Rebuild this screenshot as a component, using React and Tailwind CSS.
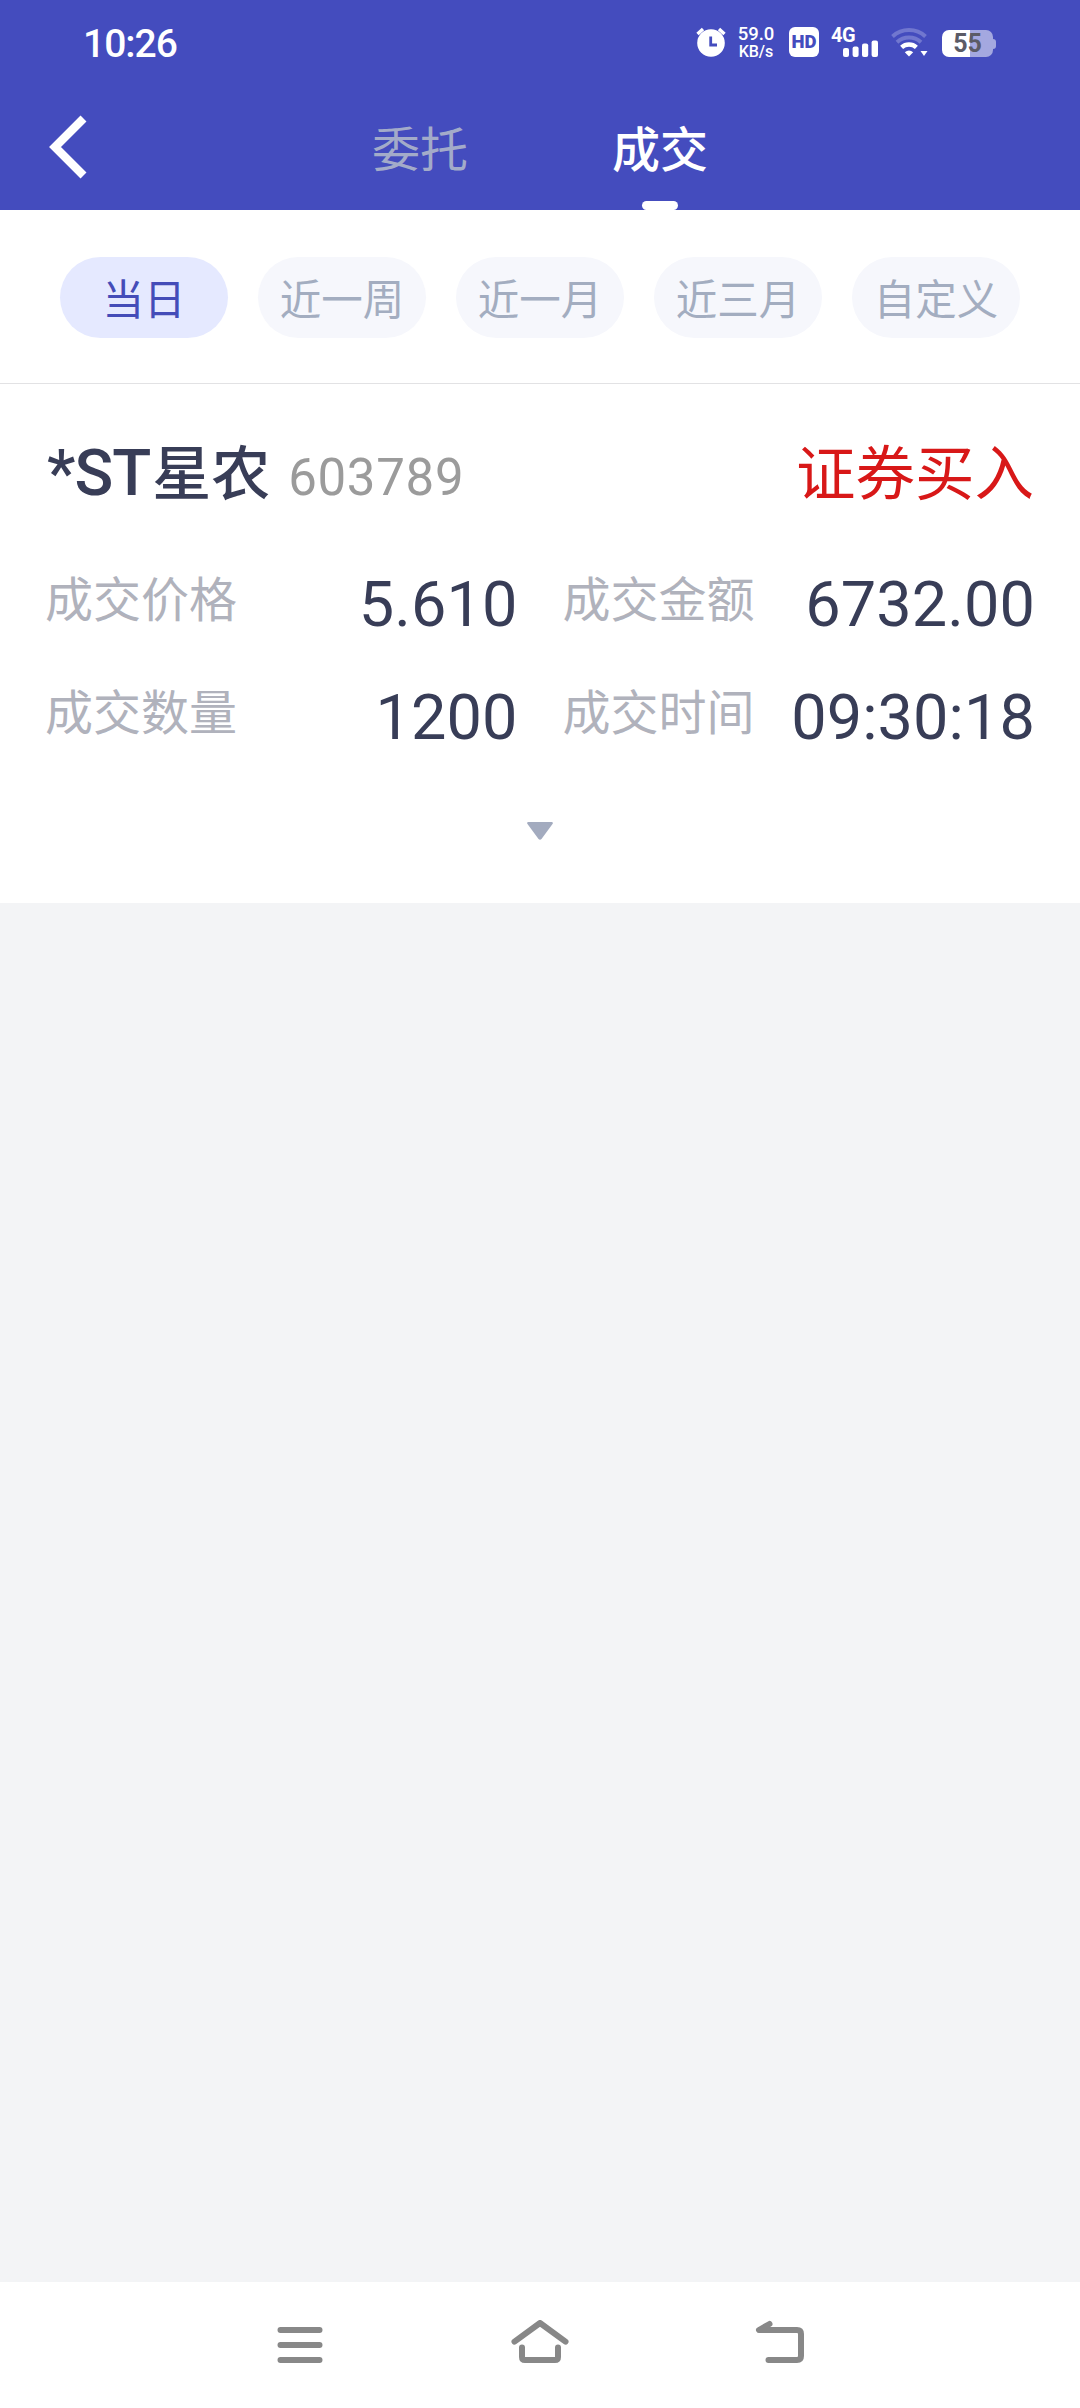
import { useState } from 'react'

const TABS = ['委托', '成交']
const RANGES = ['当日', '近一周', '近一月', '近三月', '自定义']

const deals = [
    {
        name: '星农',
        prefix: '*ST',
        code: '603789',
        side: '证券买入',
        fields: [
            { label: '成交价格', value: '5.610' },
            { label: '成交金额', value: '6732.00' },
            { label: '成交数量', value: '1200' },
            { label: '成交时间', value: '09:30:18' },
        ],
    },
]

function AlarmIcon() {
    return (
        <svg width="30" height="30" viewBox="0 0 30 30" fill="none">
            <circle cx="15" cy="16" r="13.8" fill="#fff" />
            <path d="M1.5 7L7 2M28.5 7L23 2" stroke="#fff" strokeWidth="3.4" />
            <path d="M14.7 9.5V18H21" stroke="#444cbe" strokeWidth="2.8" />
        </svg>
    )
}

function SignalIcon() {
    return (
        <svg width="35" height="17" viewBox="0 0 35 17" fill="#fff">
            <rect x="0" y="8" width="6" height="9" rx="2" />
            <rect x="9.6" y="6.5" width="6" height="10.5" rx="2" />
            <rect x="19" y="3.5" width="6.2" height="13.5" rx="2" />
            <rect x="28.6" y="0.5" width="6.4" height="16.5" rx="2" />
        </svg>
    )
}

function WifiIcon() {
    return (
        <svg width="37" height="29" viewBox="0 0 37 29" fill="none">
            <path d="M1.5 8.5A24.5 24.5 0 0 1 34.5 8.5" stroke="#7177cf" strokeWidth="4" />
            <path d="M6 14.2A17.5 17.5 0 0 1 30 14.2" stroke="#7177cf" strokeWidth="4" />
            <path d="M10.6 19.3A11 11 0 0 1 25.4 19.3" stroke="#fff" strokeWidth="4.4" />
            <path d="M13.8 24.3Q18 20.7 22.2 24.3L18 28.5Z" fill="#fff" />
            <path d="M29.5 23H36.5L33 28Z" fill="#fff" />
        </svg>
    )
}

function StatusBar() {
    return (
        <div className="flex h-[84px] items-start pr-[84px] pl-[83px] text-white">
            <span className="mt-[25px] text-[39px] leading-[39px] font-medium tracking-[-1px]">10:26</span>
            <div className="mt-[27px] ml-auto flex items-start">
                <AlarmIcon />
                <div className="ml-[10px] flex w-[40px] flex-col items-center font-medium">
                    <span className="-mt-[2px] text-[18.5px] leading-[18px]">59.0</span>
                    <span className="text-[16px] leading-[17px]">KB/s</span>
                </div>
                <div className="ml-[13px] flex h-[30px] w-[30px] items-center justify-center rounded-[6px] bg-white">
                    <span className="text-[18.5px] leading-none font-black text-[#444cbe]">HD</span>
                </div>
                <div className="relative ml-[12px] h-[30px] w-[47px]">
                    <span className="absolute top-[-2px] left-0 text-[20px] leading-[20px] font-bold tracking-[-0.5px]">4G</span>
                    <div className="absolute right-0 bottom-0"><SignalIcon /></div>
                </div>
                <div className="mt-px ml-[12.5px]"><WifiIcon /></div>
                <div className="mt-[3px] ml-[14.5px] flex items-center">
                    <div className="flex h-[27px] w-[51px] items-center justify-center rounded-[7px] bg-linear-to-r from-white from-55% to-[#a4a8e0] to-55%">
                        <span className="text-[25px] leading-none font-bold text-[#5b5b66]">55</span>
                    </div>
                    <div className="h-[10px] w-[3px] rounded-r-[3px] bg-[#a4a8e0]" />
                </div>
            </div>
        </div>
    )
}

function Header({ tab, setTab }) {
    return (
        <header className="h-[210px] bg-[#444cbe]">
            <StatusBar />
            <div className="relative flex h-[126px] justify-center gap-[144px]">
                <button className="absolute top-[31px] left-[48px]">
                    <svg width="40" height="64" viewBox="0 0 40 64" fill="none">
                        <path d="M35.5 3.5L7 32L35.5 60.5" stroke="#fff" strokeWidth="8.4" />
                    </svg>
                </button>
                {TABS.map((t) => (
                    <button
                        key={t}
                        onClick={() => setTab(t)}
                        className="flex flex-col items-center justify-between"
                    >
                        <span
                            className={
                                t === tab
                                    ? 'mt-[43px] text-[48px] leading-[48px] font-medium text-white'
                                    : 'mt-[43px] text-[48px] leading-[48px] text-[#a3abc9]'
                            }
                        >
                            {t}
                        </span>
                        {t === tab && <span className="h-[9px] w-[36px] rounded-full bg-white" />}
                    </button>
                ))}
            </div>
        </header>
    )
}

function DealCard({ deal }) {
    return (
        <section className="h-[519px] bg-white px-[45px] pt-[60px]">
            <div className="flex h-[60px] items-baseline text-[#383d57]">
                <span className="ml-[2px] text-[64px] leading-[60px] font-medium tracking-[-1px]">{deal.prefix}</span>
                <span className="ml-[2px] text-[59px] leading-[60px] font-medium">{deal.name}</span>
                <span className="ml-[18px] text-[51px] leading-[60px] tracking-[0.7px] text-[#9b9b9b]">{deal.code}</span>
                <span className="mr-px ml-auto text-[59.5px] leading-[60px] text-[#d81818]">{deal.side}</span>
            </div>
            <div className="mt-[73px] grid grid-cols-2 gap-x-[45px] gap-y-[65px]">
                {deal.fields.map((f) => (
                    <div key={f.label} className="flex h-[48px] justify-between">
                        <span className="text-[48px] leading-[48px] text-[#b0b2bc]">{f.label}</span>
                        <span className="text-[63px] leading-[56px] tracking-[0.1px] text-[#383d57]">{f.value}</span>
                    </div>
                ))}
            </div>
            <svg className="mx-auto mt-[84px]" width="26" height="18" viewBox="0 0 26 18" fill="#a3abbf">
                <path d="M1 0H25Q26.5 0.5 25.5 2L14.5 17Q13 18.5 11.5 17L0.5 2Q-0.5 0.5 1 0Z" />
            </svg>
        </section>
    )
}

function NavBar() {
    return (
        <nav className="flex h-[126px] items-start justify-center bg-white pt-[38px]">
            <svg width="240" height="46" viewBox="0 0 240 46" fill="none" stroke="#888" strokeWidth="6" strokeLinecap="round">
                <path d="M100.5 10H139.5M100.5 25H139.5M100.5 40H139.5" />
            </svg>
            <svg width="240" height="46" viewBox="0 0 240 46" fill="none" stroke="#888" strokeWidth="6" strokeLinecap="round" strokeLinejoin="round">
                <path d="M94.5 21.7L120 3L145.5 21.7" />
                <path d="M102 27.5V37Q102 40 105 40H135Q138 40 138 37V27.5" />
            </svg>
            <svg width="240" height="46" viewBox="0 0 240 46" fill="none" stroke="#888" strokeWidth="6" strokeLinecap="round" strokeLinejoin="round">
                <path d="M109.5 4L99 10H137Q141 10 141 14V36Q141 40 137 40H108.5" />
            </svg>
        </nav>
    )
}

export default function App() {
    const [tab, setTab] = useState('成交')
    const [range, setRange] = useState('当日')

    return (
        <div className="flex h-[2408px] w-[1080px] flex-col overflow-hidden bg-[#f3f4f6] font-[Roboto,'Noto_Sans_CJK_SC',sans-serif]">
            <Header tab={tab} setTab={setTab} />

            <div className="flex h-[174px] items-start justify-between border-b border-[#e2e2e4] bg-white px-[60px] pt-[47px]">
                {RANGES.map((r) => (
                    <button
                        key={r}
                        onClick={() => setRange(r)}
                        className={
                            r === range
                                ? 'h-[81px] w-[168px] rounded-full bg-[#e5e9ff] pt-[2px] text-[41.5px] leading-[84px] text-[#444cb8]'
                                : 'h-[81px] w-[168px] rounded-full bg-[#f6f7fc] pt-[2px] text-[41.5px] leading-[84px] text-[#a3adc0]'
                        }
                    >
                        {r}
                    </button>
                ))}
            </div>

            <main className="flex-1">
                {deals.map((d) => <DealCard key={d.code} deal={d} />)}
            </main>

            <NavBar />
        </div>
    )
}
